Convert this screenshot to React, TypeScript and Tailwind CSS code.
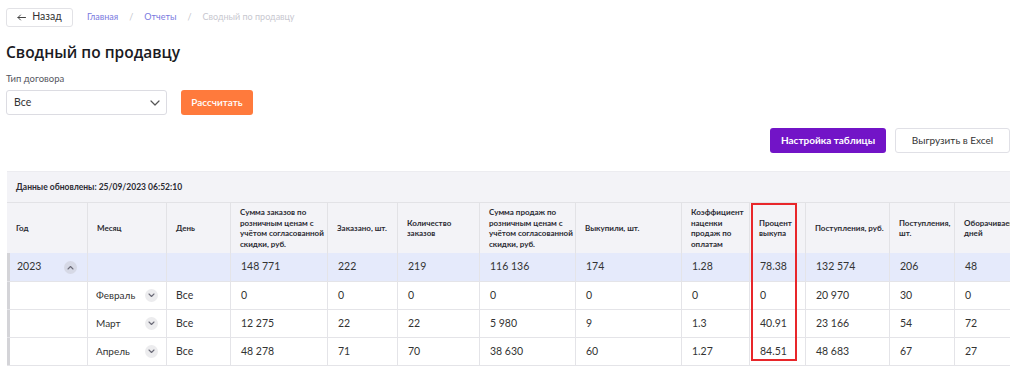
import React from "react";

const cols = [81, 79, 64, 97, 70, 82, 96, 106, 68, 56, 84, 65, 90];
const headers = [
  "Год",
  "Месяц",
  "День",
  "Сумма заказов по розничным ценам с учётом согласованной скидки, руб.",
  "Заказано, шт.",
  "Количество заказов",
  "Сумма продаж по розничным ценам с учётом согласованной скидки, руб.",
  "Выкупили, шт.",
  "Коэффициент наценки продаж по оплатам",
  "Процент выкупа",
  "Поступления, руб.",
  "Поступления, шт.",
  "Оборачиваемость, дней",
];

type Row = { year?: string; month?: string; day?: string; vals: string[] };
const rows: Row[] = [
  { year: "2023", vals: ["148 771", "222", "219", "116 136", "174", "1.28", "78.38", "132 574", "206", "48"] },
  { month: "Февраль", day: "Все", vals: ["0", "0", "0", "0", "0", "0", "0", "20 970", "30", "0"] },
  { month: "Март", day: "Все", vals: ["12 275", "22", "22", "5 980", "9", "1.3", "40.91", "23 166", "54", "72"] },
  { month: "Апрель", day: "Все", vals: ["48 278", "71", "70", "38 630", "60", "1.27", "84.51", "48 683", "67", "27"] },
];

function Chevron({ up, dark }: { up?: boolean; dark?: boolean }) {
  return (
    <span
      className={`flex h-[13px] w-[13px] items-center justify-center rounded-full ${dark ? "bg-[#d6d9e6]" : "bg-[#ececee]"}`}
    >
      <svg width="7" height="5" viewBox="0 0 7 5" fill="none">
        <path
          d={up ? "M1 4L3.5 1.5L6 4" : "M1 1L3.5 3.5L6 1"}
          stroke="#6b6b78"
          strokeWidth="1.1"
          strokeLinecap="round"
          strokeLinejoin="round"
        />
      </svg>
    </span>
  );
}

export default function App() {
  return (
    <div className="relative h-[367px] w-[1024px] overflow-hidden bg-white font-['Lato','Liberation_Sans',sans-serif] text-[#2b2b33]">
      {/* top bar */}
      <div className="mt-[8px] flex h-[18px] items-center pl-[6px]">
        <button className="flex h-[19px] w-[67px] items-center justify-center gap-[6px] rounded-[3px] border border-[#e2e2e6] bg-white text-[10.5px] text-[#333]">
          <svg width="9" height="7" viewBox="0 0 9 7" fill="none">
            <path d="M8.5 3.5H1M3.5 1L1 3.5L3.5 6" stroke="#444" strokeWidth="1" strokeLinecap="round" strokeLinejoin="round" />
          </svg>
          <span>Назад</span>
        </button>
        <div className="ml-[14px] flex items-center text-[9px]">
          <span className="text-[#7a7ae0]">Главная</span>
          <span className="mx-[11px] text-[#c5c5cc]">/</span>
          <span className="text-[#7a7ae0]">Отчеты</span>
          <span className="mx-[11px] text-[#c5c5cc]">/</span>
          <span className="text-[#c8c8d0]">Сводный по продавцу</span>
        </div>
      </div>

      <h1 className="ml-[6px] mt-[14px] font-['Open_Sans','Noto_Sans',sans-serif] text-[15.5px] font-semibold leading-[24px] text-[#1a1a22]">
        Сводный по продавцу
      </h1>

      <div className="ml-[6px] mt-[9px] text-[9.5px] leading-[12px] text-[#55555e]">Тип договора</div>
      <div className="ml-[6px] mt-[5px] flex items-center gap-[14px]">
        <div className="flex h-[25px] w-[161px] items-center justify-between rounded-[3px] border border-[#dcdce2] pl-[7px] pr-[6px] text-[10.5px] text-[#333]">
          <span>Все</span>
          <svg width="10" height="6" viewBox="0 0 10 6" fill="none">
            <path d="M1 1L5 5L9 1" stroke="#555" strokeWidth="1.2" strokeLinecap="round" strokeLinejoin="round" />
          </svg>
        </div>
        <button className="h-[25px] w-[72px] rounded-[3px] bg-[#ff7a3c] text-[10px] font-semibold text-white">
          Рассчитать
        </button>
      </div>

      <div className="mr-[14px] mt-[13px] flex justify-end gap-[9px]">
        <button className="h-[25px] w-[116px] rounded-[3px] bg-[#7214c7] text-[10px] font-bold text-white">
          Настройка таблицы
        </button>
        <button className="h-[25px] w-[115px] rounded-[3px] border border-[#e0e0e6] bg-white text-[10px] text-[#333]">
          Выгрузить в Excel
        </button>
      </div>

      {/* table */}
      <div className="ml-[7px] mt-[18px] w-[1003px] overflow-hidden">
        <div className="flex h-[31px] items-center border-t border-[#ececf0] bg-[#f3f3f7] pl-[9px] text-[8.5px] font-bold text-[#2b2b33]">
          Данные обновлены: 25/09/2023 06:52:10
        </div>
        <div className="flex h-[51px] border-t border-[#e2e2e6] bg-[#f3f3f7]">
          {headers.map((h, i) => (
            <div
              key={i}
              style={{ width: cols[i] }}
              className="flex shrink-0 items-center border-r border-[#e2e2e6] pl-[9px] pr-[1px] text-[8px] font-bold leading-[10.5px] text-[#2b2b33]"
            >
              {h}
            </div>
          ))}
        </div>
        {rows.map((r, ri) => (
          <div
            key={ri}
            className={`flex ${ri === 0 ? "h-[29px] bg-[#e5eafb]" : "h-[28px] bg-white"} border-b border-[#e4e4e8] text-[10.5px] text-[#333]`}
          >
            <div
              style={{ width: cols[0] }}
              className="flex shrink-0 items-center justify-between border-l-[3px] border-r border-l-[#d4d4d8] border-r-[#e4e4e8] pl-[7px] pr-[10px]"
            >
              {r.year ? (
                <>
                  <span>{r.year}</span>
                  <Chevron up dark />
                </>
              ) : null}
            </div>
            <div
              style={{ width: cols[1] }}
              className="flex shrink-0 items-center justify-between border-r border-[#e4e4e8] pl-[8px] pr-[8px]"
            >
              {r.month ? (
                <>
                  <span className="text-[10px]">{r.month}</span>
                  <Chevron />
                </>
              ) : null}
            </div>
            <div style={{ width: cols[2] }} className="flex shrink-0 items-center border-r border-[#e4e4e8] pl-[9px]">
              {r.day}
            </div>
            {r.vals.map((v, vi) => (
              <div
                key={vi}
                style={{ width: cols[vi + 3] }}
                className="flex shrink-0 items-center border-r border-[#e4e4e8] pl-[10px]"
              >
                {v}
              </div>
            ))}
          </div>
        ))}
      </div>

      {/* annotation */}
      <div className="absolute left-[751px] top-[203px] h-[158px] w-[46px] border-2 border-[#e8262a]" />
    </div>
  );
}
